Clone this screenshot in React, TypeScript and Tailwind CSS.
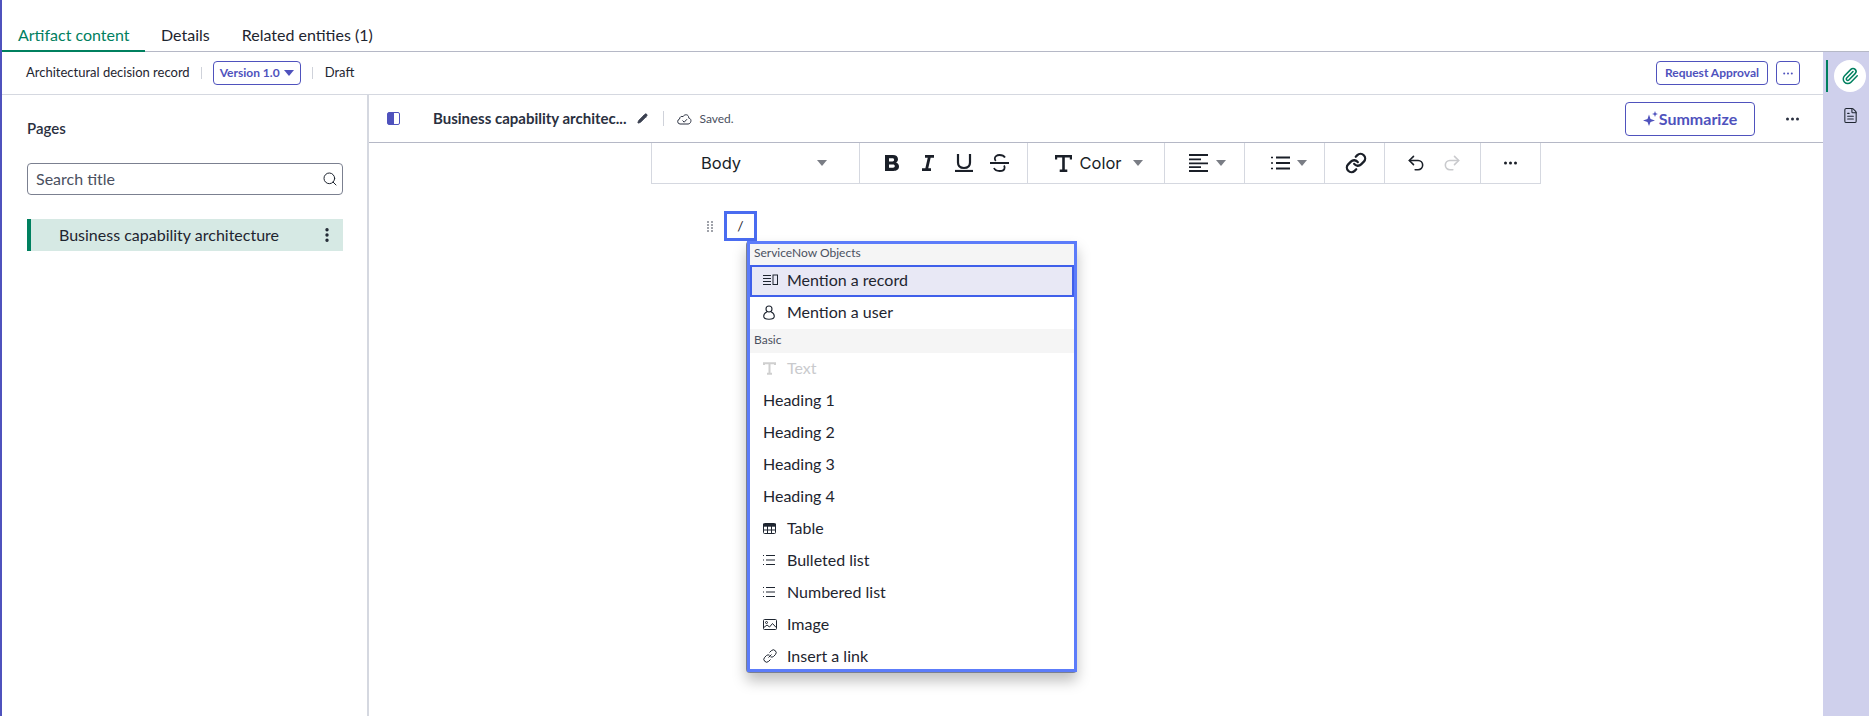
import { EllipsisVertical, FileText, Link, Paperclip, Pencil, Redo2, Search, Undo2 } from 'lucide-react'
import type { ReactNode } from 'react'

const Caret = ({ className = 'border-t-[#7a7d85]' }: { className?: string }) => (
  <span className={`inline-block w-0 h-0 border-x-[5px] border-x-transparent border-t-[6px] ${className}`} />
)

const Sep = ({ className = 'h-3' }: { className?: string }) => <span className={`w-px bg-[#cfd2da] ${className}`} />

function MoreDots({ className = '' }: { className?: string }) {
  return (
    <svg width="13" height="4" viewBox="0 0 13 4" className={className}>
      <circle cx="1.500" cy="2" r="1.500" fill="currentColor" />
      <circle cx="6.500" cy="2" r="1.500" fill="currentColor" />
      <circle cx="11.500" cy="2" r="1.500" fill="currentColor" />
    </svg>
  )
}

function RecordIcon() {
  return (
    <svg width="15" height="12" viewBox="0 0 15 12" fill="none" stroke="#1e2530">
      <path d="M0 1.500h8M0 4.500h8M0 7.500h8M0 10.500h8" />
      <rect x="10" y="1" width="4.500" height="9.500" />
    </svg>
  )
}

function UserIcon() {
  return (
    <svg width="12" height="15" viewBox="0 0 12 15" fill="none" stroke="#1e2530" strokeWidth="1.100">
      <circle cx="6" cy="4" r="3" />
      <path d="M3.800 7C1.500 8 .7 9.700.7 11.200c0 1.800 1.600 3 5.300 3s5.300-1.200 5.300-3C11.300 9.700 10.500 8 8.200 7" />
    </svg>
  )
}

function TextIcon() {
  return (
    <svg width="13" height="13" viewBox="0 0 13 13" fill="none" stroke="#cfcfcf" strokeWidth="2">
      <path d="M1 3V1.200h11V3M6.500 1.200v10.500M4 11.800h5" />
    </svg>
  )
}

function TableIcon() {
  return (
    <svg width="13" height="11" viewBox="0 0 13 11" fill="none" stroke="#1e2530">
      <rect x=".5" y=".5" width="12" height="10" rx="1" />
      <path d="M0 2.200h13" strokeWidth="3" />
      <path d="M.5 7h12M4.500 3v7.500M8.500 3v7.500" />
    </svg>
  )
}

function ListIcon() {
  return (
    <svg width="12" height="10" viewBox="0 0 12 10" stroke="#1e2530">
      <path d="M3 .5h9M3 5h9M3 9.500h9" />
      <path d="M0 .5h1M0 5h1M0 9.500h1" />
    </svg>
  )
}

function ImageIcon() {
  return (
    <svg width="14" height="11" viewBox="0 0 14 11" fill="none" stroke="#1e2530">
      <rect x=".5" y=".5" width="13" height="10" rx="1" />
      <circle cx="3.500" cy="3.500" r="1" />
      <path d="M.8 8.500 4 6l2.500 2L9.500 4.500l3.700 4" />
    </svg>
  )
}

function LinkIcon() {
  return (
    <svg width="14" height="14" viewBox="0 0 14 14" fill="none" stroke="#1e2530">
      <path d="M5.500 8.500 8.500 5.500" />
      <path d="M6.500 3.500 8.300 1.700a2.700 2.700 0 0 1 4 4L10.500 7.500a2.700 2.700 0 0 1-3 .3" />
      <path d="M7.500 10.500 5.700 12.300a2.700 2.700 0 0 1-4-4L3.500 6.500a2.700 2.700 0 0 1 3-.3" />
    </svg>
  )
}

function Row({ icon, muted, children }: { icon?: ReactNode; muted?: boolean; children: ReactNode }) {
  return (
    <div className={`h-8 flex items-center pl-[13px] pb-[2px] text-base shrink-0 ${muted ? 'text-[#c9cacd]' : 'text-[#1e2530]'}`}>
      {icon && <span className="w-[24px] flex items-center">{icon}</span>}
      <span>{children}</span>
    </div>
  )
}

function MenuHeader({ children }: { children: ReactNode }) {
  return <div className="bg-[#f5f5f5] text-xs text-[#4a5060] pl-1 flex items-center">{children}</div>
}

function SlashMenu() {
  return (
    <div className="absolute left-[377px] top-[146px] w-[331px] h-[432px] rounded-sm border-l border-b border-[#7b8090] shadow-[0_8px_14px_rgba(0,0,0,0.25)] bg-white">
      <div className="h-full border-[3px] border-[#5c7cfa] flex flex-col overflow-hidden">
        <MenuHeader><span className="h-[21px] pb-1 flex items-center">ServiceNow Objects</span></MenuHeader>
        <div className="h-8 border-2 border-[#3f5fea] bg-[#e8e8f5] flex items-center pl-[11px] pb-[2px] text-base text-[#1e2530] shrink-0">
          <span className="w-[24px] flex items-center"><RecordIcon /></span>
          <span>Mention a record</span>
        </div>
        <Row icon={<UserIcon />}>Mention a user</Row>
        <MenuHeader><span className="h-6 pb-[2px] flex items-center">Basic</span></MenuHeader>
        <Row muted icon={<TextIcon />}>Text</Row>
        <Row>Heading 1</Row>
        <Row>Heading 2</Row>
        <Row>Heading 3</Row>
        <Row>Heading 4</Row>
        <Row icon={<TableIcon />}>Table</Row>
        <Row icon={<ListIcon />}>Bulleted list</Row>
        <Row icon={<ListIcon />}>Numbered list</Row>
        <Row icon={<ImageIcon />}>Image</Row>
        <Row icon={<LinkIcon />}>Insert a link</Row>
      </div>
    </div>
  )
}

function ToolGroup({ width, children, last }: { width: string; children: ReactNode; last?: boolean }) {
  return (
    <div className={`${width} h-full flex items-center justify-center shrink-0 ${last ? '' : 'border-r border-[#d5d8e0]'}`}>
      {children}
    </div>
  )
}

function FormatToolbar() {
  const dark = '#1a1f28'
  return (
    <div className="ml-[282px] w-[890px] h-[41px] flex border-x border-b border-[#d5d8e0] font-['Inter',sans-serif] text-[#1a1f28]">
      <ToolGroup width="w-[208px]">
        <span className="text-[16.5px] ml-[17px] w-[116px]">Body</span>
        <Caret />
      </ToolGroup>
      <ToolGroup width="w-[168px]">
        <div className="flex items-center pl-1">
          <span className="w-9 flex justify-center">
            <svg width="16" height="18" viewBox="0 0 16 18" fill={dark}>
              <path fillRule="evenodd" d="M1 1h8c3 0 5 1.500 5 4.200 0 1.600-.8 2.800-2 3.400 1.700.6 3 2 3 4 0 3-2.300 4.400-5.500 4.400H1V1zm4 3.200v3.200h3.500c1 0 1.600-.6 1.600-1.600s-.6-1.600-1.600-1.600H5zm0 6.200v3.400h4c1.100 0 1.800-.7 1.800-1.700s-.7-1.700-1.800-1.700H5z" />
            </svg>
          </span>
          <span className="w-9 flex justify-center">
            <svg width="12" height="16" viewBox="0 0 12 16" fill="none" stroke={dark} strokeWidth="2.800">
              <path d="M3 1.400h9M0 14.600h9M7.500 1.400 4.500 14.600" />
            </svg>
          </span>
          <span className="w-9 flex justify-center">
            <svg width="18" height="18" viewBox="0 0 18 18" fill="none" stroke={dark} strokeWidth="2.200">
              <path d="M3 0v8.500c0 3.700 2.300 5.500 6 5.500s6-1.800 6-5.500V0" />
              <path d="M0 17h18" />
            </svg>
          </span>
          <span className="w-9 flex justify-center">
            <svg width="19" height="18" viewBox="0 0 19 18" fill="none" stroke={dark} strokeWidth="1.800">
              <path d="M15 3.500C14 1.800 12 1 9.500 1 7 1 4.800 2.200 4.800 4.500c0 .9.400 1.700 1 2.300M0 9h19M14 11.500c.4.600.6 1.200.6 1.900 0 2.300-2.300 3.600-5 3.600-2.600 0-4.800-1-5.600-3" />
            </svg>
          </span>
        </div>
      </ToolGroup>
      <ToolGroup width="w-[137px]">
        <div className="flex items-center pl-[6px]">
          <svg width="17" height="17" viewBox="0 0 17 17" fill={dark} className="mr-[7px]">
            <path d="M0 0h17v4.500h-2.200V2.500H9.800v12h2.500V17H4.700v-2.500h2.500v-12H2.200v2H0z" />
          </svg>
          <span className="text-[16.5px] mr-[11px]">Color</span>
          <Caret />
        </div>
      </ToolGroup>
      <ToolGroup width="w-[80px]">
        <div className="flex items-center pl-[6px]">
          <svg width="19" height="18" viewBox="0 0 19 18" stroke={dark} strokeWidth="1.800" className="mr-2">
            <path d="M0 1h19M0 5.300h12M0 9.300h19M0 13.100h12M0 17h19" />
          </svg>
          <Caret />
        </div>
      </ToolGroup>
      <ToolGroup width="w-[80px]">
        <div className="flex items-center pl-2">
          <svg width="19" height="14" viewBox="0 0 19 14" stroke={dark} strokeWidth="2" className="mr-[7px]">
            <path d="M5 1.500h14M5 7h14M5 12.500h14" />
            <path d="M0 1.500h2M0 7h2M0 12.500h2" strokeWidth="1.500" />
          </svg>
          <Caret />
        </div>
      </ToolGroup>
      <ToolGroup width="w-[60px]">
        <Link size={22} strokeWidth={2.500} color={dark} className="ml-[3px]" />
      </ToolGroup>
      <ToolGroup width="w-[96px]">
        <div className="flex items-center gap-4 pl-[3px]">
          <Undo2 size={20} strokeWidth={1.900} color={dark} />
          <Redo2 size={20} strokeWidth={1.900} color="#c9cacd" />
        </div>
      </ToolGroup>
      <ToolGroup width="w-[59px]" last>
        <MoreDots className="text-[#1a1f28]" />
      </ToolGroup>
    </div>
  )
}

function PagesPanel() {
  return (
    <aside className="w-[367px] shrink-0 border-r-2 border-[#d5d8e0] pl-[25px] pr-6 pt-[23px]">
      <h2 className="text-[15px] leading-5 font-semibold text-[#2a3040]">Pages</h2>
      <div className="mt-[25px] h-8 border border-[#7b8090] rounded flex items-center pl-2 pr-1 text-[#4a5060]">
        <span className="text-base flex-1">Search title</span>
        <Search size={16} strokeWidth={1.500} color="#1e2530" />
      </div>
      <div className="mt-[24px] h-8 bg-[#d6e9e4] border-l-4 border-[#00805f] flex items-center pl-[28px] pr-[7px] text-base text-[#1e2530]">
        <span className="flex-1">Business capability architecture</span>
        <EllipsisVertical size={18} strokeWidth={2.500} />
      </div>
    </aside>
  )
}

function Editor() {
  return (
    <main className="flex-1 relative">
      <div className="h-[48px] border-b border-[#b5b8c6] flex items-center pl-[18px] pr-6">
        <span className="w-[13px] h-[13px] rounded-[2px] border-[1.500px] border-[#4f52bd] flex">
          <span className="w-[6px] bg-[#4f52bd]" />
        </span>
        <span className="ml-[33px] text-[15px] font-bold text-[#2a3040]">Business capability architec...</span>
        <Pencil size={11} strokeWidth={2} fill="#3a4050" color="#3a4050" className="ml-[11px]" />
        <Sep className="h-[15px] ml-[15px]" />
        <svg width="15" height="12" viewBox="0 0 15 12" fill="none" stroke="#2a3040" strokeWidth="1" className="ml-[13px]">
          <path d="M4 11H3a2.500 2.500 0 0 1-.5-4.900C2.700 3.700 4.500 3 6 3.600 7 1.600 10.500.8 11.500 3.500c.2.500.2 1 .1 1.500 2 .3 2.700 2.200 2.200 3.700-.4 1.400-1.500 2.300-2.800 2.300z" />
          <path d="m5.500 7.500 1.700 1.700 2.800-3" />
        </svg>
        <span className="ml-[7px] text-xs text-[#4a5060]">Saved.</span>
        <div className="flex-1" />
        <button className="w-[130px] h-[34px] border border-[#4f52bd] rounded flex items-center justify-center text-base font-bold text-[#4f52bd]">
          <svg width="15" height="15" viewBox="0 0 15 15" fill="#4f52bd" className="mr-px">
            <path d="M6 3.500 7.500 8 12 9.500 7.500 11 6 15 4.500 11 0 9.500 4.500 8zM12 0l.8 2.200L15 3l-2.200.8L12 6l-.8-2.200L9 3l2.200-.8z" />
          </svg>
          Summarize
        </button>
        <MoreDots className="ml-[31px] text-[#2a3040]" />
      </div>
      <FormatToolbar />
      <div className="absolute left-[338px] top-[126px] flex items-center">
        <svg width="6" height="11" viewBox="0 0 6 11" fill="#a0a3aa">
          {[0, 3, 6, 9].flatMap((y) => [0, 4].map((x) => <rect key={`${x}-${y}`} x={x} y={y} width="2" height="2" />))}
        </svg>
      </div>
      <div className="absolute left-[355px] top-[116px] w-[33px] h-[30px] border-[3px] border-[#4a6cf0] flex items-center justify-center text-sm text-[#1e2530]">
        /
      </div>
      <SlashMenu />
    </main>
  )
}

export default function App() {
  return (
    <div className="h-[716px] w-[1869px] overflow-hidden bg-white border-l-2 border-[#4f52bd] font-['Lato',sans-serif] flex flex-col">
      <div className="h-[52px] pt-[19px] border-b border-[#b5b8c6] flex text-base text-[#1e2530] shrink-0">
        <div className="h-[33px] w-[143px] pl-4 flex items-center border-b-2 border-[#00805f] text-[#00805f]">Artifact content</div>
        <div className="h-[32px] ml-4 flex items-center">Details</div>
        <div className="h-[32px] ml-8 flex items-center">Related entities (1)</div>
      </div>
      <div className="flex-1 flex min-h-0">
        <div className="flex-1 flex flex-col min-w-0">
          <div className="h-[43px] border-b border-[#d5d8e0] flex items-center pl-6 pr-[23px] text-[13px] text-[#1e2530] shrink-0">
            <span>Architectural decision record</span>
            <Sep className="h-3 ml-[11px]" />
            <button className="ml-[11px] w-[88px] h-[24px] border border-[#4f52bd] rounded flex items-center justify-center gap-1 text-xs font-bold text-[#4f52bd]">
              Version 1.0
              <Caret className="border-t-[#4f52bd]" />
            </button>
            <Sep className="h-3 ml-[11px]" />
            <span className="ml-[12px]">Draft</span>
            <div className="flex-1" />
            <button className="w-[112px] h-[24px] border border-[#4f52bd] rounded text-xs font-bold text-[#4f52bd]">Request Approval</button>
            <button className="ml-2 w-[24px] h-[24px] border border-[#4f52bd] rounded flex items-center justify-center text-[#4f52bd]">
              <svg width="10" height="3" viewBox="0 0 10 3" fill="currentColor">
                <circle cx="1.200" cy="1.500" r="1" /><circle cx="5" cy="1.500" r="1" /><circle cx="8.800" cy="1.500" r="1" />
              </svg>
            </button>
          </div>
          <div className="flex-1 flex min-h-0">
            <PagesPanel />
            <Editor />
          </div>
        </div>
        <div className="w-[46px] shrink-0 bg-[#cfd0ec] relative flex flex-col items-center pt-2 pl-2">
          <span className="absolute left-[3px] top-2 w-[2px] h-8 bg-[#00805f]" />
          <span className="w-8 h-8 rounded-full bg-white flex items-center justify-center">
            <Paperclip size={18} strokeWidth={2} color="#00805f" />
          </span>
          <FileText size={17} strokeWidth={1.500} color="#1e2530" className="mt-[15px]" />
        </div>
      </div>
    </div>
  )
}
